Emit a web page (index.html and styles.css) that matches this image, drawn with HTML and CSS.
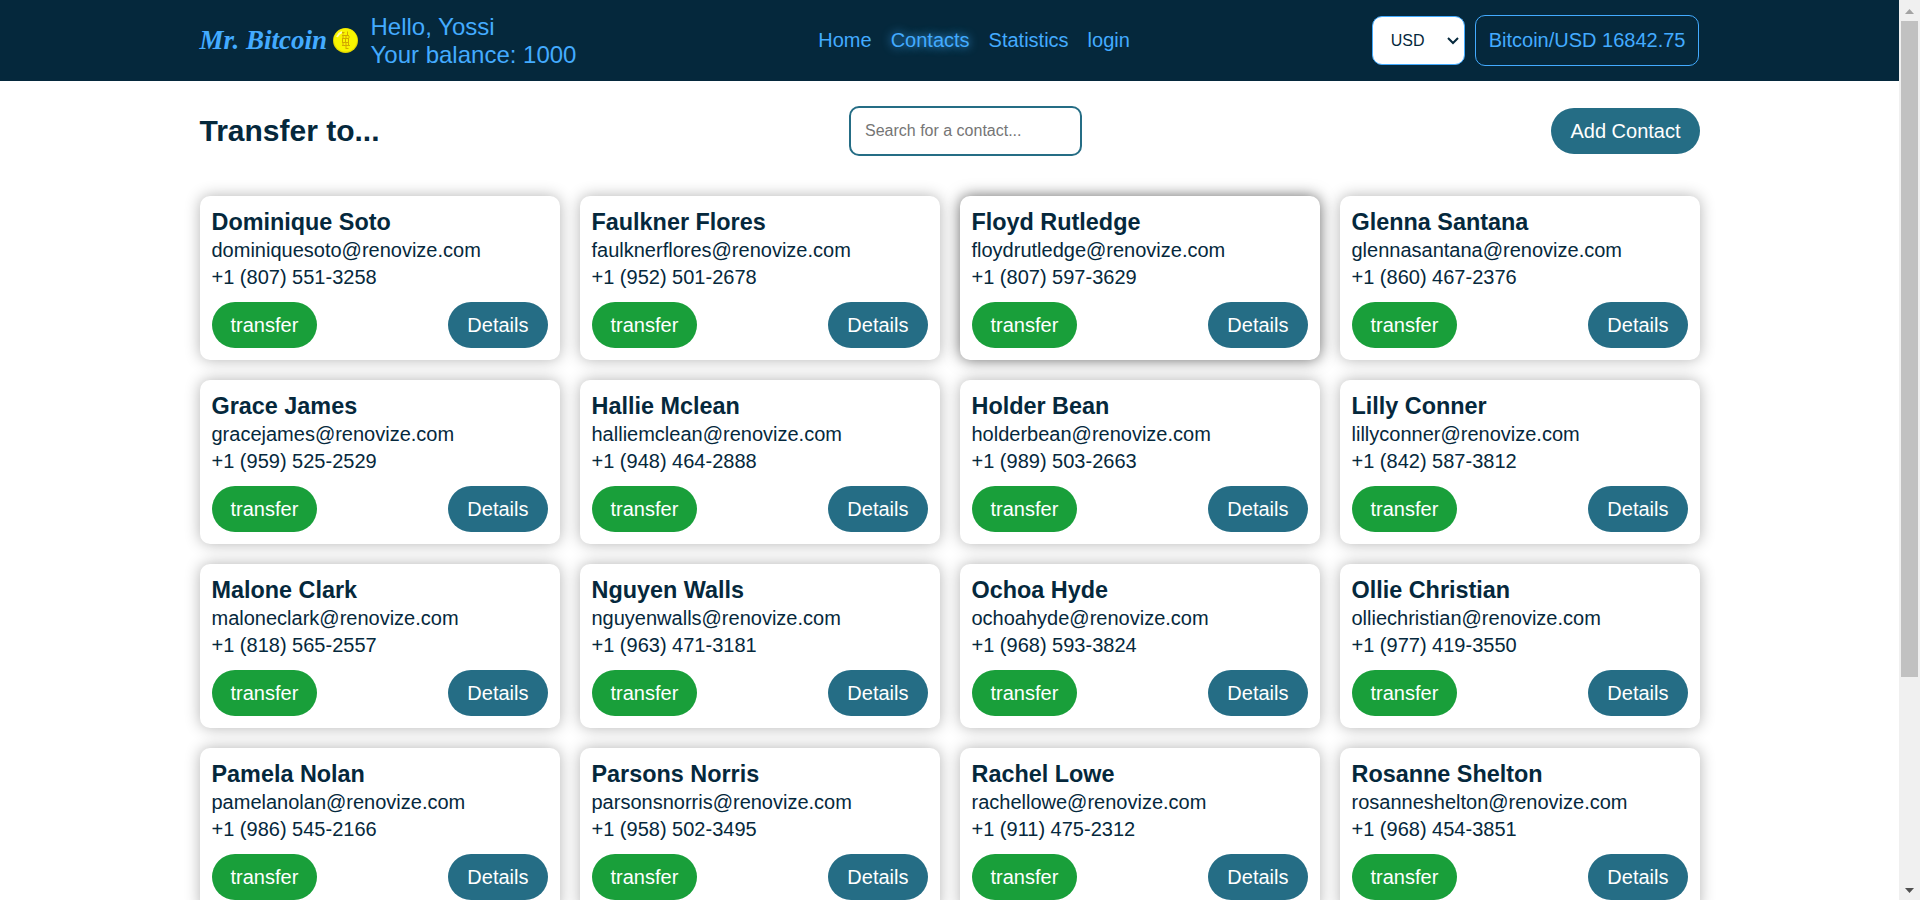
FILE: index.html
```html
<!DOCTYPE html>
<html lang="en">
<head>
<meta charset="utf-8">
<meta name="viewport" content="width=device-width, initial-scale=1">
<title>Mr. Bitcoin</title>
<link rel="stylesheet" href="styles.css">
</head>
<body>
<div class="page">
  <header class="app-header">
    <div class="container header-row">
      <div class="brand">
        <a class="logo" href="#">Mr. Bitcoin</a>
        <svg class="coin" viewBox="0 0 25 25" aria-hidden="true">
          <circle cx="12.5" cy="12.5" r="12.5" fill="#e3d600"/>
          <circle cx="12.5" cy="12" r="11.5" fill="#f8f500"/>
          <path d="M4 9a9 9 0 0 1 5-5" fill="none" stroke="#fffbb0" stroke-width="2"/>
          <path d="M9 4.500h2.500M9 7.500h7M9 10.500h7M9 14.500h7M9 17.500h8M12.500 20.500h3M10 4.500v2M14.500 3.500v4M10 8v2M13 8v2M16 8v2M9.500 11v3M12.500 11v3M15.500 11v3M10 15v2M13 15v5M15.500 15v2" fill="none" stroke="#d3a800" stroke-width="1"/>
        </svg>
        <div class="greeting">
          <div>Hello, Yossi</div>
          <div>Your balance: 1000</div>
        </div>
      </div>
      <nav class="nav">
        <a href="#">Home</a>
        <a href="#" class="active" aria-current="page">Contacts</a>
        <a href="#">Statistics</a>
        <a href="#">login</a>
      </nav>
      <div class="rate">
        <div class="currency">
          <select class="currency-select" aria-label="Currency"><option>USD</option></select>
          <svg class="chevron" viewBox="0 0 12 8" aria-hidden="true"><path d="M1 1l5 5 5-5"/></svg>
        </div>
        <div class="price">Bitcoin/USD 16842.75</div>
      </div>
    </div>
  </header>
  <main class="container">
    <div class="toolbar">
      <h2>Transfer to...</h2>
      <input class="search" type="text" placeholder="Search for a contact..." aria-label="Search for a contact">
      <button class="btn" type="button">Add Contact</button>
    </div>
    <ul class="contacts" id="contacts"></ul>
  </main>
</div>
<div class="scrollbar" aria-hidden="true">
  <svg class="arrow" viewBox="0 0 21 21"><path d="M6 14l4.500-5 4.500 5z" fill="#a3a3a3"/></svg>
  <div class="track"><div class="thumb"></div></div>
  <svg class="arrow" viewBox="0 0 21 21"><path d="M6 9l4.500 5 4.500-5z" fill="#505050"/></svg>
</div>
<script src="app.js"></script>
</body>
</html>
```
FILE: styles.css
```css
* {
  box-sizing: border-box;
}

body {
  display: flex;
  height: 100vh;
  margin: 0;
  background: #fff;
  color: #05283c;
  font-family: "Liberation Sans", Arial, sans-serif;
  font-size: 20px;
}

.page {
  flex: 1;
  min-width: 0;
  overflow-y: auto;
  scrollbar-width: none;
}

.scrollbar {
  display: flex;
  flex-direction: column;
  flex: none;
  width: 21px;
  background: #f0f0f0;
}

.arrow {
  display: block;
  flex: none;
  width: 21px;
  height: 21px;
}

.track {
  flex: 1;
  padding: 0 2px;
}

.thumb {
  height: 76.5%;
  background: #c1c1c1;
}

.container {
  width: 100%;
  max-width: 1500px;
  margin: 0 auto;
}

main.container {
  padding: 25px 0 268px;
}

.app-header {
  background: #05283c;
  color: #43abff;
}

.app-header a {
  color: inherit;
  text-decoration: none;
}

.header-row {
  display: flex;
  align-items: center;
  justify-content: space-between;
  min-height: 81px;
}

.brand {
  display: flex;
  align-items: center;
}

.brand .logo {
  width: 133px;
  font-family: "Brush Script MT", "Liberation Serif", cursive;
  font-size: 27px;
  font-style: italic;
  font-weight: 700;
  white-space: nowrap;
}

.coin {
  width: 25px;
  height: 25px;
  margin-right: 13px;
}

.greeting {
  font-size: 24px;
  line-height: 28px;
}

.nav {
  display: flex;
  gap: 19px;
}

.nav .active {
  text-shadow: 0 0 10px #43abff;
}

.rate {
  display: flex;
  align-items: center;
  gap: 10px;
}

.currency {
  position: relative;
}

.currency-select {
  appearance: none;
  width: 93px;
  height: 49px;
  padding: 0 18px;
  border: 1px solid #43abff;
  border-radius: 10px;
  background: #fff;
  color: #05283c;
  font: 16px "Liberation Sans", Arial, sans-serif;
}

.chevron {
  position: absolute;
  top: 21px;
  right: 6px;
  width: 12px;
  height: 8px;
  fill: none;
  stroke: #05283c;
  stroke-width: 2;
  pointer-events: none;
}

.price {
  padding: 13px;
  border: 1px solid #43abff;
  border-radius: 10px;
  line-height: 23px;
}

.toolbar {
  display: flex;
  align-items: center;
  justify-content: space-between;
  margin-bottom: 40px;
}

.toolbar h2 {
  margin: 0;
  font-size: 30px;
}

.search {
  width: 233px;
  height: 50px;
  padding: 0 14px;
  border: 2px solid #256d85;
  border-radius: 10px;
  color: #05283c;
  font: 16px "Liberation Sans", Arial, sans-serif;
}

.search::placeholder {
  color: #757575;
}

.btn {
  height: 46px;
  padding: 0 19px;
  border: 0;
  border-radius: 23px;
  background: #256d85;
  color: #fff;
  font: 20px "Liberation Sans", Arial, sans-serif;
}

.btn-transfer {
  background: #199f3a;
}

.contacts {
  display: grid;
  grid-template-columns: repeat(auto-fill, minmax(320px, 1fr));
  gap: 20px;
  margin: 0;
  padding: 0;
  list-style: none;
}

.card {
  padding: 12px;
  border-radius: 10px;
  background: #fff;
  box-shadow: 0 0 15px rgba(0, 0, 0, 0.3);
  line-height: 27px;
}

.card.raised {
  box-shadow: 0 0 15px rgba(0, 0, 0, 0.6);
}

.card h3 {
  margin: 0;
  line-height: 29px;
}

.actions {
  display: flex;
  justify-content: space-between;
  margin-top: 11px;
}
```
FILE: app.js
```js
const contacts = [
  ["Dominique Soto", "+1 (807) 551-3258"],
  ["Faulkner Flores", "+1 (952) 501-2678"],
  ["Floyd Rutledge", "+1 (807) 597-3629"],
  ["Glenna Santana", "+1 (860) 467-2376"],
  ["Grace James", "+1 (959) 525-2529"],
  ["Hallie Mclean", "+1 (948) 464-2888"],
  ["Holder Bean", "+1 (989) 503-2663"],
  ["Lilly Conner", "+1 (842) 587-3812"],
  ["Malone Clark", "+1 (818) 565-2557"],
  ["Nguyen Walls", "+1 (963) 471-3181"],
  ["Ochoa Hyde", "+1 (968) 593-3824"],
  ["Ollie Christian", "+1 (977) 419-3550"],
  ["Pamela Nolan", "+1 (986) 545-2166"],
  ["Parsons Norris", "+1 (958) 502-3495"],
  ["Rachel Lowe", "+1 (911) 475-2312"],
  ["Rosanne Shelton", "+1 (968) 454-3851"]
];

document.getElementById("contacts").innerHTML = contacts.map(([name, phone], i) => `
  <li class="card${i === 2 ? " raised" : ""}">
    <h3>${name}</h3>
    <div>${name.toLowerCase().replace(" ", "")}@renovize.com</div>
    <div>${phone}</div>
    <div class="actions">
      <button class="btn btn-transfer" type="button">transfer</button>
      <button class="btn" type="button">Details</button>
    </div>
  </li>`).join("");
```
